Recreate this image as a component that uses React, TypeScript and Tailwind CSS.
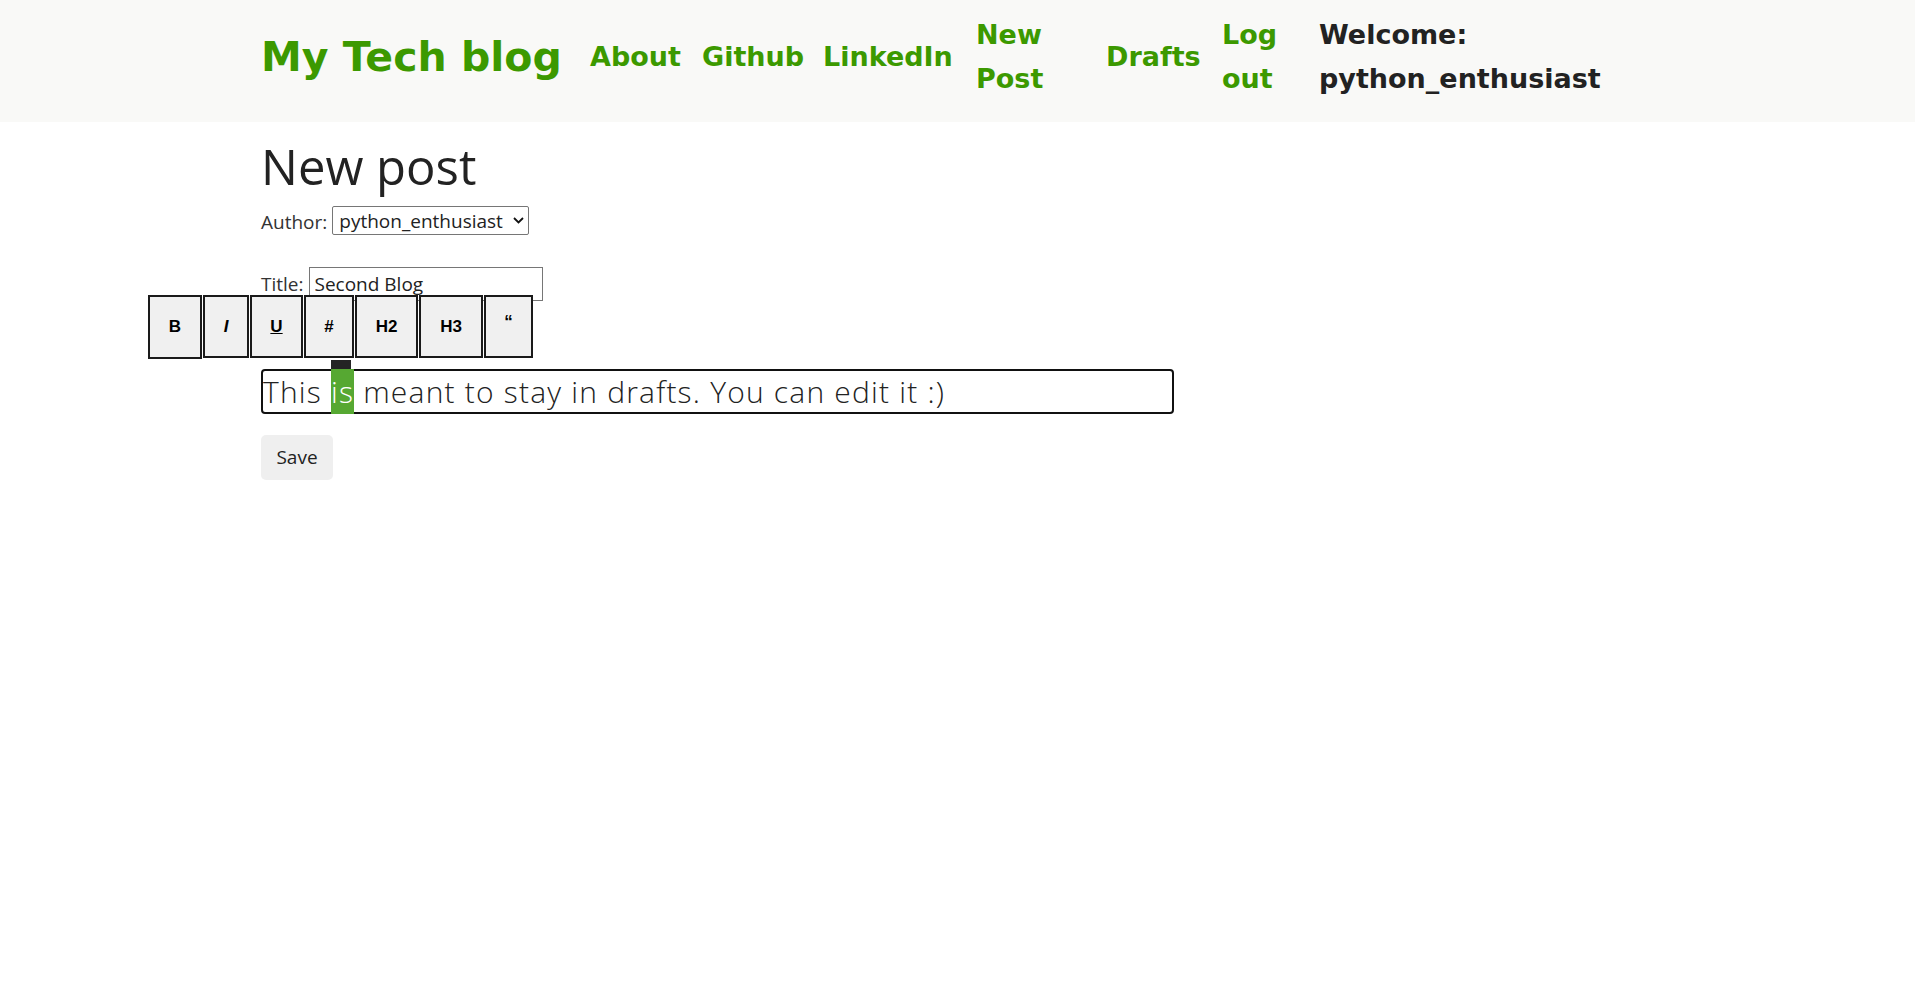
import React from "react";

const navFont = { fontFamily: '"DejaVu Sans", sans-serif' };

function NavLink({ children, className = "" }: { children: React.ReactNode; className?: string }) {
  return (
    <a href="#" className={`block shrink-0 text-[27px] leading-[44px] font-bold text-[#3c9900] no-underline ${className}`}>
      {children}
    </a>
  );
}

function ToolButton({ children, w, h = "h-[63px]" }: { children: React.ReactNode; w: string; h?: string }) {
  return (
    <button
      className={`${w} ${h} shrink-0 border-2 border-[#1a1a1a] bg-[#f0f0f0] flex items-center justify-center text-[17px] font-bold text-black`}
      style={{ fontFamily: '"Liberation Sans", Arial, sans-serif' }}
    >
      {children}
    </button>
  );
}

export default function App() {
  return (
    <div className="relative min-h-[993px] bg-white text-[#222]" style={{ fontFamily: '"Open Sans", sans-serif' }}>
      <header className="h-[122px] bg-[#f9f9f7]">
        <nav className="flex items-center gap-[23px] pl-[261px] pt-[13px]" style={navFont}>
          <a href="#" className="block w-[306px] shrink-0 text-[41px] leading-none font-bold text-[#3c9900] whitespace-nowrap">
            My Tech blog
          </a>
          <NavLink className="w-[89px] whitespace-nowrap">About</NavLink>
          <NavLink className="w-[98px] whitespace-nowrap">Github</NavLink>
          <NavLink className="w-[130px] whitespace-nowrap">LinkedIn</NavLink>
          <NavLink className="w-[107px]">New Post</NavLink>
          <NavLink className="w-[93px] whitespace-nowrap">Drafts</NavLink>
          <NavLink className="w-[74px]">Log out</NavLink>
          <div className="w-[300px] shrink-0 text-[27px] leading-[44px] font-bold text-[#222]">
            Welcome: python_enthusiast
          </div>
        </nav>
      </header>

      <main className="pl-[261px]">
        <h1 className="mt-[15px] text-[49px] leading-[58px] font-medium text-[#222]">New post</h1>

        <div className="mt-[11px] flex items-start h-[29px]">
          <label className="text-[19px] leading-[25px] pt-[4px] mr-[5px] text-[#333]">Author:</label>
          <div className="relative">
            <select
              className="appearance-none w-[197px] h-[29px] border border-[#767676] rounded-[2px] bg-white pl-[6px] pt-[1px] pb-0 text-[19px] leading-[27px] text-[#222] outline-none"
              defaultValue="python_enthusiast"
              style={{ fontFamily: '"Open Sans", sans-serif' }}
            >
              <option value="python_enthusiast">python_enthusiast</option>
            </select>
            <svg className="pointer-events-none absolute left-[181px] top-[11px]" width="11" height="7" viewBox="0 0 11 7">
              <path d="M1 1 L5.5 5.5 L10 1" fill="none" stroke="#111" strokeWidth="1.8" />
            </svg>
          </div>
        </div>

        <div className="mt-[32px] flex items-center h-[34px]">
          <label className="text-[19px] mr-[5px] text-[#333]">Title:</label>
          <input
            className="w-[234px] h-[34px] border border-[#767676] px-[5px] text-[19px] text-[#222] outline-none"
            defaultValue="Second Blog"
            style={{ fontFamily: '"Open Sans", sans-serif' }}
          />
        </div>

        <div
          className="mt-[68px] w-[913px] h-[45px] border-2 border-[#111] rounded-[4px] flex items-center whitespace-pre text-[30px] tracking-[1.2px] font-light text-[#222]"
          style={{ fontFamily: '"Open Sans", sans-serif' }}
        >
          <span>This </span>
          <span className="self-stretch -my-[2px] flex items-center bg-[#56a832] text-white">is</span>
          <span> meant to stay in drafts. You can edit it :)</span>
        </div>

        <button className="mt-[21px] w-[72px] h-[45px] rounded-[5px] bg-[#efefef] text-[19px] text-[#222] flex items-center justify-center">
          Save
        </button>
      </main>

      <div className="absolute left-[148px] top-[295px] flex items-start gap-[1px]">
        <ToolButton w="w-[54px]" h="h-[64px]">B</ToolButton>
        <ToolButton w="w-[46px]"><i>I</i></ToolButton>
        <ToolButton w="w-[53px]"><u>U</u></ToolButton>
        <ToolButton w="w-[50px]">#</ToolButton>
        <ToolButton w="w-[63px]">H2</ToolButton>
        <ToolButton w="w-[64px]">H3</ToolButton>
        <ToolButton w="w-[49px]"><span className="-mt-[10px]">“</span></ToolButton>
      </div>
      <div className="absolute left-[331px] top-[360px] w-[20px] h-[9px] bg-[#242424]" />
    </div>
  );
}
